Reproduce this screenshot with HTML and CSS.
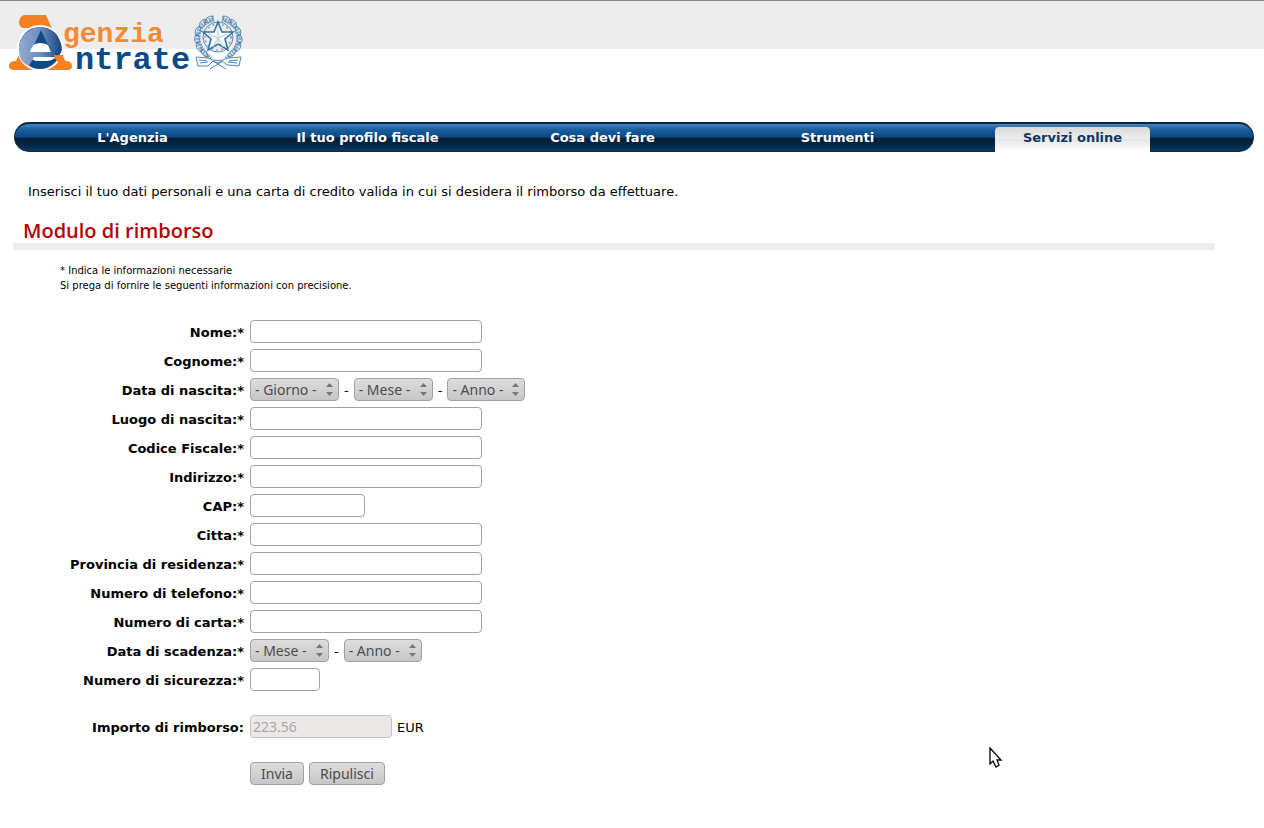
FILE: index.html
```html
<!DOCTYPE html>
<html lang="it">
<head>
<meta charset="utf-8">
<title>Agenzia Entrate - Modulo di rimborso</title>
<link rel="stylesheet" href="styles.css">
</head>
<body>
<header class="site-header">
  <svg class="logo" width="250" height="84" viewBox="0 0 250 84" role="img" aria-label="Agenzia Entrate">
    <defs>
      <linearGradient id="shade" x1="0" y1="0" x2="1" y2="0">
        <stop offset="0" stop-color="#93a9d0"/><stop offset="0.5" stop-color="#6f8dbf"/><stop offset="1" stop-color="#15457f"/>
      </linearGradient>
    </defs>
    <path fill="#f58220" d="M24 14H46L52 28L62 52L65 60Q72 60 72 65Q72 69 68 69H14Q9 69 9 65Q9 60 16 60L31 27H23Q19 26 19 21Q20 15 24 14Z"/>
    <circle cx="40" cy="47" r="23" fill="#fff"/>
    <circle cx="40" cy="47" r="21" fill="#0d4a86"/>
    <path fill="#fff" d="M33 44Q40 40 48 44L51 51H29Z"/>
    <path fill="#fff" d="M30 56H56Q52 60 46 60H38Q32 60 30 56Z"/>
    <path fill="url(#shade)" fill-rule="evenodd" d="M20 56Q16 41 26 32Q34 25 42 26Q56 28 60 40Q63 47 61 52H55Q58 56 50 56H34Q31 61 29 65Q22 62 20 56ZM41 29L35 42Q31 46 30 51H51Q50 46 47 42Z"/>
    <path fill="#f58220" d="M54 54H62L66 62H61Q55 61 54 54Z"/>
    <text class="logo-top" x="63" y="41">genzia</text>
    <text class="logo-bottom" x="75" y="68">ntrate</text>
    <g fill="none" stroke="#5489b5" stroke-width="1">
      <circle cx="218" cy="36" r="15"/>
      <circle cx="218" cy="36" r="13" stroke-dasharray="2 3" stroke-width="2" stroke="#8db0cc"/>
      <path stroke-width="5" stroke-dasharray="2 1" stroke="#86abc9" d="M214 18Q198 22 198 38Q200 50 211 58M222 18Q238 22 239 38Q237 50 226 58"/>
      <path d="M213 15Q205 15 205 22Q213 22 213 15ZM205 18Q198 20 200 27Q207 26 205 18ZM200 25Q193 28 196 35Q202 33 200 25ZM197 33Q192 38 197 43Q202 39 197 33ZM197 41Q194 47 201 51Q204 45 197 41ZM201 48Q201 55 208 56Q208 50 201 48Z"/>
      <path d="M223 15Q231 15 231 22Q223 22 223 15ZM231 18Q238 20 236 27Q229 26 231 18ZM236 25Q243 28 240 35Q234 33 236 25ZM239 33Q245 38 240 43Q234 39 239 33ZM240 41Q243 47 236 51Q232 45 240 41ZM236 48Q236 55 228 56Q228 50 236 48Z"/>
      <path fill="#f6f8fa" d="M196 56L208 57Q218 62 228 57L241 56L239 65L227 64L222 60L218 62L213 60L208 65L198 65Z"/>
      <path d="M199 59L207 60M200 62L208 61M229 60L238 59M228 61L237 62M213 60L226 68M223 60L210 68"/>
    </g>
    <path d="M218 21L222 31L233 31L225 38L228 49L218 43L208 49L211 38L203 31L214 31Z" fill="#f6f8fa" stroke="#3974a5" stroke-width="1.6"/>
    <path d="M218 25V43M209 33L218 37L227 33M213 46L218 37L223 46" fill="none" stroke="#bdd1e0" stroke-width="1"/>
  </svg>
</header>

<nav class="main-nav">
  <a href="#">L'Agenzia</a>
  <a href="#">Il tuo profilo fiscale</a>
  <a href="#">Cosa devi fare</a>
  <a href="#">Strumenti</a>
  <a href="#" class="active">Servizi online</a>
</nav>

<main class="content">
  <p class="intro">Inserisci il tuo dati personali e una carta di credito valida in cui si desidera il rimborso da effettuare.</p>
  <h1 class="title">Modulo di rimborso</h1>
  <p class="notes">* Indica le informazioni necessarie<br>Si prega di fornire le seguenti informazioni con precisione.</p>

  <form class="form">
    <label for="nome">Nome:*</label>
    <div class="field"><input id="nome" type="text"></div>
    <label for="cognome">Cognome:*</label>
    <div class="field"><input id="cognome" type="text"></div>
    <label for="giorno">Data di nascita:*</label>
    <div class="field">
      <select id="giorno" class="day"><option>- Giorno -</option></select>
      <span>-</span>
      <select class="month" aria-label="Mese di nascita"><option>- Mese -</option></select>
      <span>-</span>
      <select class="year" aria-label="Anno di nascita"><option>- Anno -</option></select>
    </div>
    <label for="luogo">Luogo di nascita:*</label>
    <div class="field"><input id="luogo" type="text"></div>
    <label for="codice">Codice Fiscale:*</label>
    <div class="field"><input id="codice" type="text"></div>
    <label for="indirizzo">Indirizzo:*</label>
    <div class="field"><input id="indirizzo" type="text"></div>
    <label for="cap">CAP:*</label>
    <div class="field"><input id="cap" type="text" class="medium"></div>
    <label for="citta">Citta:*</label>
    <div class="field"><input id="citta" type="text"></div>
    <label for="provincia">Provincia di residenza:*</label>
    <div class="field"><input id="provincia" type="text"></div>
    <label for="telefono">Numero di telefono:*</label>
    <div class="field"><input id="telefono" type="text"></div>
    <label for="carta">Numero di carta:*</label>
    <div class="field"><input id="carta" type="text"></div>
    <label for="scadenza">Data di scadenza:*</label>
    <div class="field">
      <select id="scadenza" class="month"><option>- Mese -</option></select>
      <span>-</span>
      <select class="year" aria-label="Anno di scadenza"><option>- Anno -</option></select>
    </div>
    <label for="sicurezza">Numero di sicurezza:*</label>
    <div class="field"><input id="sicurezza" type="text" class="short"></div>
    <label for="importo" class="spaced">Importo di rimborso:</label>
    <div class="field spaced"><input id="importo" type="text" class="amount" value="223.56" disabled><span>EUR</span></div>
    <div class="actions spaced">
      <button type="submit">Invia</button>
      <button type="reset">Ripulisci</button>
    </div>
  </form>
</main>

<svg class="pointer" width="14" height="22" viewBox="0 0 14 22" aria-hidden="true">
  <path d="M1 1V17L4 14L7 20L10 18L8 13H12Z" fill="#fff" stroke="#000" stroke-width="1.3"/>
</svg>
</body>
</html>
```
FILE: styles.css
```css
* {
  box-sizing: border-box;
}

body {
  margin: 0;
  background: #fff;
  color: #000;
  font-family: "DejaVu Sans", Verdana, sans-serif;
  font-size: 13px;
}

.site-header {
  height: 122px;
  border-top: 1px solid #8a8688;
  background: linear-gradient(#ededed, #ededed) no-repeat 0 0 / 100% 48px;
}

.logo {
  display: block;
}

.logo-top,
.logo-bottom {
  font-family: "Liberation Mono", "Courier New", monospace;
  font-weight: bold;
}

.logo-top {
  fill: #f58a35;
  font-size: 28px;
}

.logo-bottom {
  fill: #0b4a86;
  font-size: 32px;
}

.main-nav {
  display: grid;
  grid-template-columns: repeat(5, 1fr);
  height: 30px;
  margin: 0 10px 0 14px;
  padding: 0 63px 0 0;
  border: 1px solid #0a2c4c;
  border-top: 2px solid #052546;
  border-radius: 15px;
  background: linear-gradient(#4487bd 0, #1b5f9e 20%, #0b4884 48%, #021f3a 54%, #042440 75%, #0c3a62 100%);
}

.main-nav a {
  display: flex;
  justify-content: center;
  align-items: center;
  color: #fff;
  font-weight: bold;
  text-decoration: none;
}

.main-nav .active {
  margin: 3px 40px -1px;
  padding-bottom: 4px;
  border-radius: 4px 4px 0 0;
  background: linear-gradient(#d9d9d9, #ededed 45%, #e5e5e5 50%, #fff 95%);
  color: #0c3661;
}

.content {
  padding: 0 49px 40px 13px;
}

.intro {
  margin: 0;
  padding: 32px 0 0 15px;
  line-height: 16px;
}

.title {
  margin: 18px 0 0;
  padding: 0 10px;
  border-bottom: 7px solid #ededed;
  color: #b30505;
  font-family: "Open Sans", "Noto Sans", sans-serif;
  font-size: 20px;
  font-weight: 600;
  line-height: 25px;
}

.notes {
  margin: 13px 0 0 47px;
  font-size: 10px;
  line-height: 15px;
}

.form {
  display: grid;
  grid-template-columns: 231px 1fr;
  column-gap: 6px;
  row-gap: 6px;
  margin-top: 27px;
  align-items: center;
}

.form label {
  padding-top: 2px;
  font-weight: bold;
  line-height: 21px;
  text-align: right;
}

.field,
.actions {
  display: flex;
  align-items: center;
  gap: 5px;
}

.field span {
  padding-top: 2px;
}

.actions {
  grid-column: 2;
}

.form .spaced {
  margin-top: 18px;
}

input,
select,
button {
  height: 23px;
  border: 1px solid #a3a1a0;
  border-radius: 4px;
  color: #4c4c4c;
  font-family: "Noto Sans", "Open Sans", sans-serif;
  font-size: 14px;
}

input {
  width: 232px;
  padding: 0 2px;
  background: #fff;
}

.medium {
  width: 115px;
}

.short {
  width: 70px;
}

.amount {
  width: 142px;
  border-color: #c5c3c1;
  background: #ebe9e8;
  color: #aaa8a7;
}

select {
  padding: 0 0 0 4px;
  appearance: none;
  background: url("data:image/svg+xml,%3Csvg xmlns='http://www.w3.org/2000/svg' width='7' height='13'%3E%3Cpath fill='%23777' d='M0 4L3.5 0L7 4ZM0 9L3.5 13L7 9Z'/%3E%3C/svg%3E") no-repeat right 5px center, linear-gradient(#dedddd, #c7c6c6);
}

.day {
  width: 89px;
}

.month {
  width: 79px;
}

.year {
  width: 78px;
}

button {
  padding: 0 10px;
  background: linear-gradient(#dedddd, #c7c6c6);
}

.pointer {
  position: absolute;
  top: 747px;
  left: 989px;
}
```
